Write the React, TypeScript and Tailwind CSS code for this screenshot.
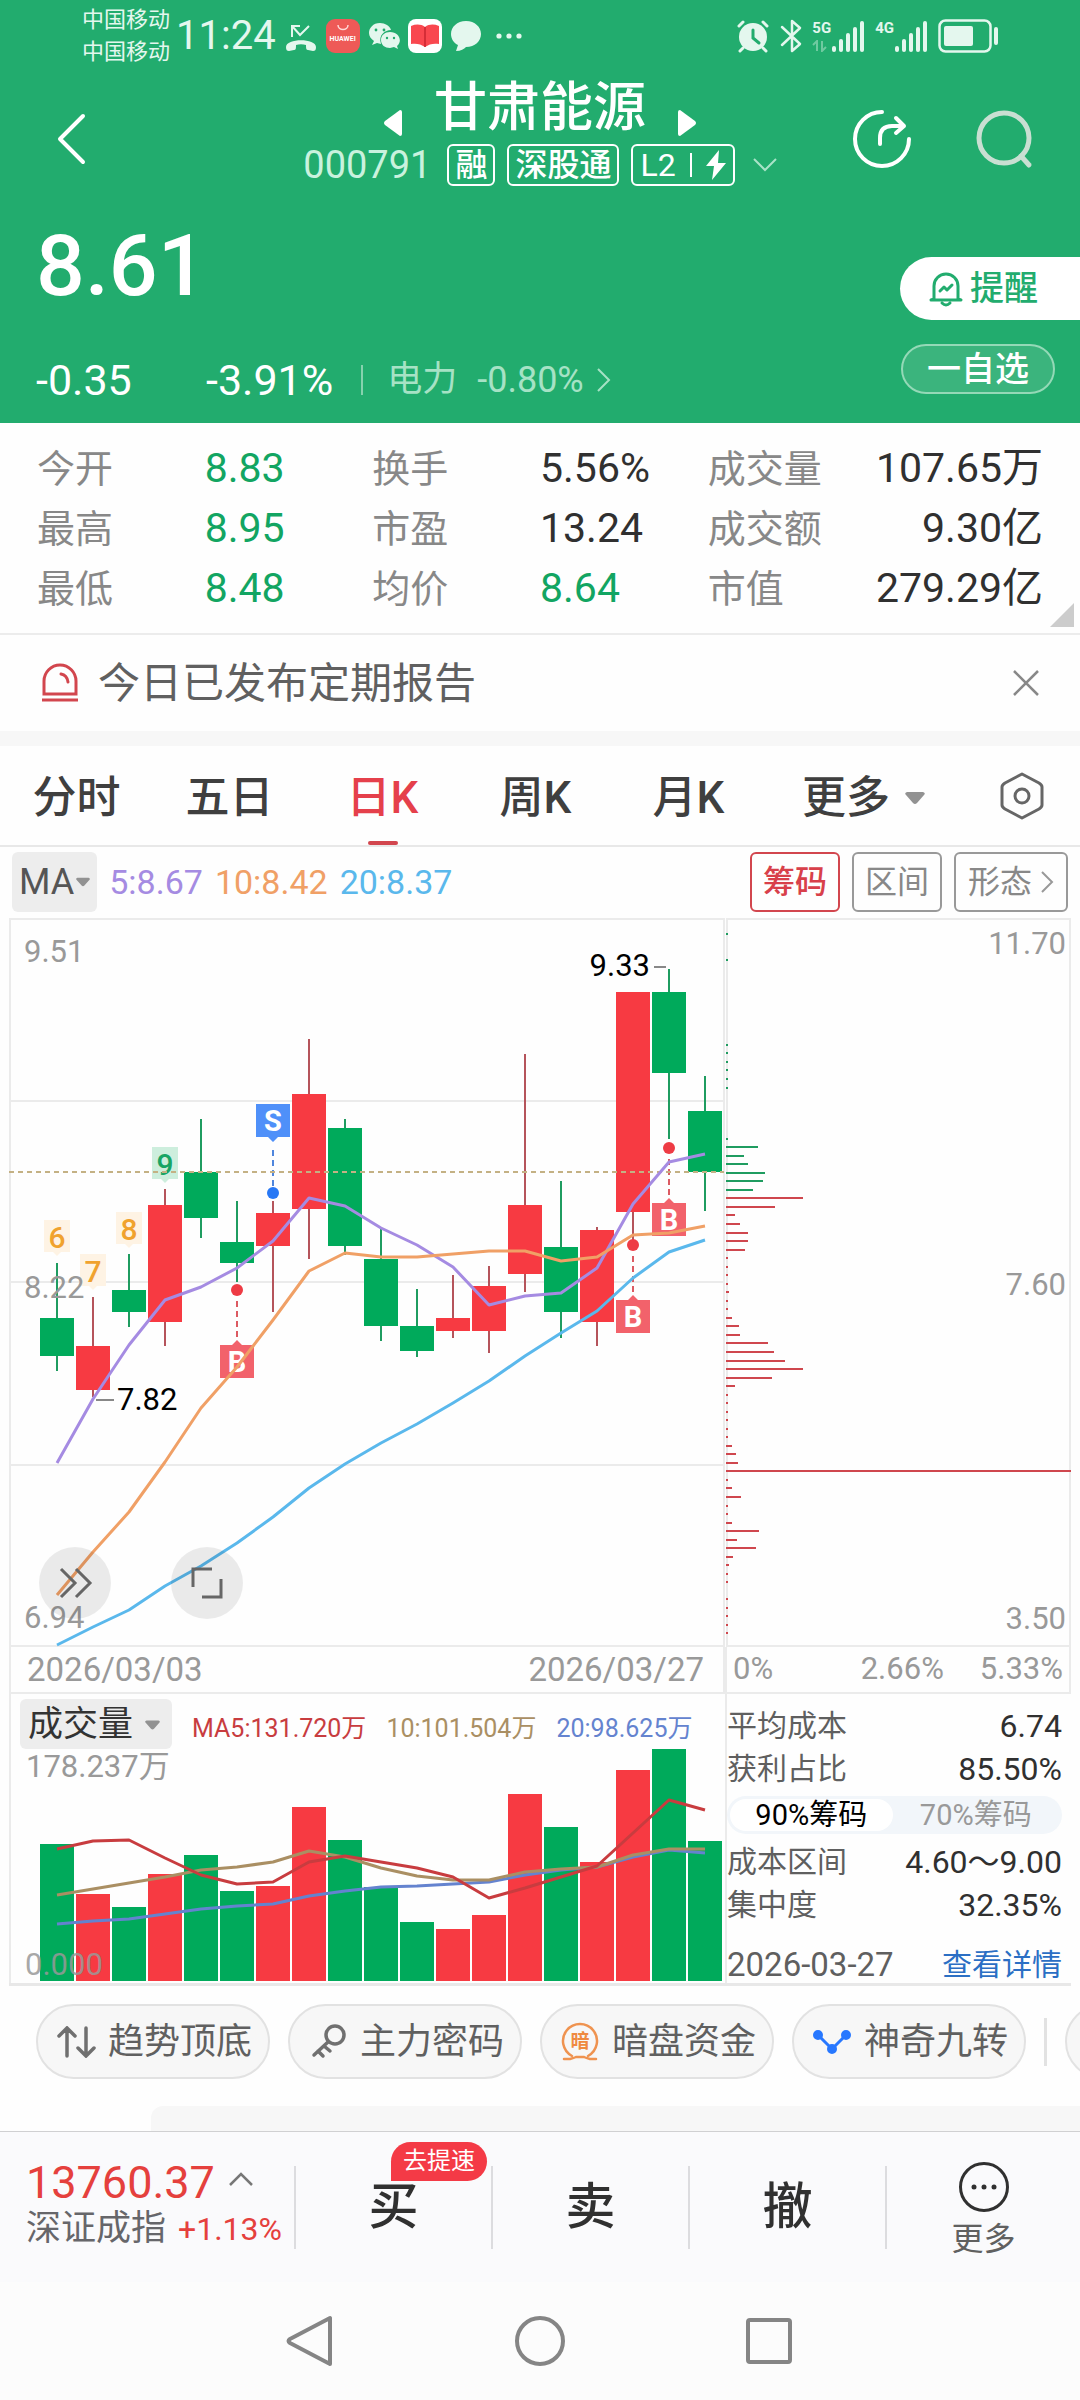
import type { ReactNode } from "react";

const GREEN = "#00aa5b";
const RED = "#f73a42";

type Candle = { up: boolean; top: number; bottom: number; high: number; low: number; volume: number };

// y values in the chart's own units, x comes from the index
const candles: Candle[] = [
  { up: false, top: 1318, bottom: 1356, high: 1263, low: 1371, volume: 1844 },
  { up: true, top: 1346, bottom: 1390, high: 1297, low: 1397, volume: 1894 },
  { up: false, top: 1290, bottom: 1312, high: 1254, low: 1327, volume: 1907 },
  { up: true, top: 1205, bottom: 1322, high: 1189, low: 1346, volume: 1874 },
  { up: false, top: 1172, bottom: 1218, high: 1119, low: 1238, volume: 1855 },
  { up: false, top: 1242, bottom: 1263, high: 1201, low: 1282, volume: 1891 },
  { up: true, top: 1213, bottom: 1246, high: 1201, low: 1312, volume: 1886 },
  { up: true, top: 1094, bottom: 1209, high: 1039, low: 1259, volume: 1807 },
  { up: false, top: 1128, bottom: 1246, high: 1119, low: 1255, volume: 1840 },
  { up: false, top: 1259, bottom: 1326, high: 1229, low: 1341, volume: 1887 },
  { up: false, top: 1326, bottom: 1351, high: 1289, low: 1357, volume: 1922 },
  { up: true, top: 1318, bottom: 1331, high: 1275, low: 1338, volume: 1929 },
  { up: true, top: 1286, bottom: 1331, high: 1266, low: 1353, volume: 1915 },
  { up: true, top: 1205, bottom: 1274, high: 1054, low: 1292, volume: 1794 },
  { up: false, top: 1247, bottom: 1312, high: 1181, low: 1338, volume: 1827 },
  { up: true, top: 1230, bottom: 1322, high: 1227, low: 1346, volume: 1862 },
  { up: true, top: 992, bottom: 1212, high: 992, low: 1242, volume: 1770 },
  { up: false, top: 992, bottom: 1073, high: 969, low: 1139, volume: 1749 },
  { up: false, top: 1111, bottom: 1172, high: 1076, low: 1211, volume: 1841 },
];

const cx = (i: number) => 57 + i * 36;
const toPoints = (ys: number[]) => ys.map((y, i) => `${cx(i)},${y}`).join(" ");

const priceLines = [
  { color: "#a58be2", ys: [1463, 1399, 1345, 1300, 1287, 1268, 1241, 1198, 1206, 1228, 1245, 1267, 1305, 1296, 1293, 1268, 1204, 1162, 1154] },
  { color: "#f0a066", ys: [1595, 1552, 1512, 1462, 1408, 1367, 1320, 1271, 1253, 1257, 1257, 1254, 1251, 1251, 1261, 1257, 1235, 1233, 1226] },
  { color: "#5ab8ec", ys: [1645, 1627, 1610, 1586, 1566, 1543, 1517, 1488, 1464, 1443, 1424, 1403, 1381, 1356, 1333, 1311, 1278, 1252, 1240] },
];

const volumeLines = [
  { color: "#6483cf", ys: [1924, 1921, 1919, 1914, 1909, 1906, 1904, 1896, 1891, 1887, 1886, 1884, 1882, 1875, 1870, 1867, 1857, 1850, 1853] },
  { color: "#aa8f63", ys: [1895, 1889, 1883, 1877, 1870, 1867, 1862, 1851, 1857, 1868, 1876, 1880, 1880, 1872, 1869, 1867, 1855, 1849, 1849] },
  { color: "#c83c3f", ys: [1849, 1841, 1840, 1858, 1875, 1884, 1882, 1862, 1856, 1862, 1868, 1877, 1898, 1888, 1877, 1866, 1833, 1800, 1810] },
];

// chip distribution, one entry per price step from the top; 0 is an empty step
const chipBars = [
  2, 0, 0, 2, 0, 0, 0, 0, 0, 0, 0, 0, 0, 2, 2, 2, 2, 2, 2, 0, 0, 0, 0, 0, 2, 32, 18, 22, 39, 37, 27, 77, 49, 9, 14, 22, 22, 19,
  2, 2, 2, 2, 3, 2, 2, 6, 13, 14, 42, 48, 59, 77, 46, 9, 2, 2, 2, 2, 2, 2, 6, 10, 12, 345, 2, 6, 15, 2, 2, 6, 33, 11, 30, 7,
  3, 2, 2, 0, 2, 2, 2, 2, 2,
];

const quote = [
  { label: "今开", value: "8.83", green: true },
  { label: "换手", value: "5.56%" },
  { label: "成交量", value: "107.65万" },
  { label: "最高", value: "8.95", green: true },
  { label: "市盈", value: "13.24" },
  { label: "成交额", value: "9.30亿" },
  { label: "最低", value: "8.48", green: true },
  { label: "均价", value: "8.64", green: true },
  { label: "市值", value: "279.29亿" },
];

const tabs = ["分时", "五日", "日K", "周K", "月K"];

const SignalBars = () => (
  <svg className="h-8 w-[34px]" viewBox="0 0 34 32" fill="#e4f7ee">
    <rect x="1" y="26" width="4" height="6" rx="2" />
    <rect x="8" y="19" width="4" height="13" rx="2" />
    <rect x="15" y="13" width="4" height="19" rx="2" />
    <rect x="22" y="7" width="4" height="25" rx="2" />
    <rect x="29" y="1" width="4" height="31" rx="2" />
  </svg>
);

const StatusBar = () => (
  <div className="flex h-[72px] items-center justify-between pr-20 pl-[82px] text-[#e4f7ee]">
    <div className="flex items-center">
      <div className="text-[22px] leading-8">
        <div>中国移动</div>
        <div>中国移动</div>
      </div>
      <div className="ml-1.5 text-[40px] leading-none">11:24</div>
      <svg className="ml-2 h-[34px] w-[34px]" viewBox="0 0 34 34" fill="none" stroke="#e4f7ee" strokeWidth="2">
        <path d="M8 18V7h8M8 7l8 9 9-9" />
        <path d="M2 28c0-9 30-9 30 0 0 3-1 4-3 4l-5-1c-2 0-2-2-2-5-3-1-7-1-10 0 0 3 0 5-2 5l-5 1c-2 0-3-1-3-4z" fill="#e4f7ee" stroke="none" />
      </svg>
      <div className="ml-2 flex size-[34px] flex-col items-center rounded-[9px] bg-[#ee5a57]">
        <svg className="mt-1 h-2.5 w-3" viewBox="0 0 12 10" fill="none" stroke="#ffd9d6" strokeWidth="1.5">
          <path d="M1 2c0 6 10 6 10 0" />
        </svg>
        <span className="text-[7px] leading-3 font-bold text-white">HUAWEI</span>
      </div>
      <svg className="ml-2 h-[34px] w-8" viewBox="0 0 32 34">
        <path d="M12 4C5 4 1 9 1 14c0 3 2 6 5 8l-2 4 5-2 4 1c-3-9 4-14 10-14-1-4-6-7-11-7z" fill="#e4f7ee" />
        <path d="M22 13c-5 0-9 3-9 8s4 8 9 8l4-1 4 2-1-3c6-5 2-14-7-14z" fill="#e4f7ee" />
        <g fill="#22ac6e">
          <circle cx="8" cy="11" r="1.4" />
          <circle cx="16" cy="11" r="1.4" />
          <circle cx="19" cy="19" r="1.2" />
          <circle cx="26" cy="19" r="1.2" />
        </g>
      </svg>
      <svg className="ml-2 size-[34px]" viewBox="0 0 34 34">
        <rect width="34" height="34" rx="8" fill="#fff" />
        <path d="M3 7c5-2 10-2 14 1 4-3 9-3 14-1v18c-5-1-10 0-14 3-4-3-9-4-14-3z" fill="#f9474f" />
        <path d="M17 8v20" stroke="#c9252f" strokeWidth="1.5" />
      </svg>
      <svg className="ml-2 h-8 w-8" viewBox="0 0 32 32" fill="#e4f7ee">
        <path d="M16 1C7 1 1 7 1 14c0 5 3 9 7 11l-2 6c5 0 8-2 10-4 9 0 15-6 15-13S25 1 16 1z" />
      </svg>
      <svg className="ml-3.5 h-2 w-[26px]" viewBox="0 0 26 8" fill="#e4f7ee">
        <circle cx="3" cy="4" r="2.6" />
        <circle cx="13" cy="4" r="2.6" />
        <circle cx="23" cy="4" r="2.6" />
      </svg>
    </div>
    <div className="flex items-center">
      <svg className="size-[34px]" viewBox="0 0 34 34" stroke="#e4f7ee" strokeWidth="3" strokeLinecap="round" fill="none">
        <circle cx="17" cy="18" r="14" fill="#e4f7ee" stroke="none" />
        <path d="M3 7l4-4M31 7l-4-4M7 29l-3 3M27 29l3 3" />
        <path d="M17 11v8l6 5" stroke="#22ac6e" />
      </svg>
      <svg className="ml-2.5 h-[34px] w-[22px]" viewBox="0 0 22 34" fill="none" stroke="#e4f7ee" strokeWidth="2.5" strokeLinejoin="round" strokeLinecap="round">
        <path d="M2 8l18 17-8 7V2l8 7L2 26" />
      </svg>
      <div className="relative ml-2.5 h-8 text-[15px] leading-4 font-bold">
        5G
        <svg className="absolute bottom-0 left-0 h-3 w-4" viewBox="0 0 16 12" fill="none" stroke="#6fcaa0" strokeWidth="2">
          <path d="M1 5l4-4v10M10 1v10l4-4" />
        </svg>
      </div>
      <SignalBars />
      <div className="ml-2.5 h-8 text-[15px] leading-4 font-bold">4G</div>
      <SignalBars />
      <svg className="ml-2.5 h-[34px] w-[62px]" viewBox="0 0 62 34" fill="none">
        <rect x="1.5" y="1.5" width="51" height="31" rx="6" stroke="#e4f7ee" strokeWidth="2.5" />
        <rect x="6" y="7" width="29" height="20" rx="2" fill="#e4f7ee" />
        <rect x="56" y="8" width="4" height="18" rx="2" fill="#e4f7ee" />
      </svg>
    </div>
  </div>
);

const TopHeader = () => (
  <header className="bg-[#22ac6e] text-white">
    <StatusBar />
    <div className="grid grid-cols-[1fr_auto_1fr] items-center">
      <button aria-label="返回" className="justify-self-start pt-5 pl-14">
        <svg className="h-[52px] w-8" viewBox="0 0 32 52" fill="none" stroke="#fff" strokeWidth="4" strokeLinecap="round" strokeLinejoin="round">
          <path d="M27 3L4 26l23 23" />
        </svg>
      </button>
      <div className="flex flex-col items-center">
        <div className="flex items-end gap-8 pt-1">
          <button aria-label="上一只" className="pb-1">
            <svg className="h-[26px] w-[18px]" viewBox="0 0 18 26" fill="#fff">
              <path d="M16 0q2 0 2 2v22q0 2-2 2L1 15q-2-2 0-4z" />
            </svg>
          </button>
          <h1 className="text-[53px] leading-[64px] font-medium">甘肃能源</h1>
          <button aria-label="下一只" className="pb-1">
            <svg className="h-[26px] w-[18px]" viewBox="0 0 18 26" fill="#fff">
              <path d="M2 0Q0 0 0 2v22q0 2 2 2l15-11q2-2 0-4z" />
            </svg>
          </button>
        </div>
        <div className="mt-1 flex h-[42px] items-center gap-3 text-[32px] leading-[38px] font-medium">
          <span className="mr-1 text-[38px] font-normal text-[#c9f2de]">000791</span>
          <span className="rounded-md border-2 border-white px-1.5">融</span>
          <span className="rounded-md border-2 border-white px-1.5">深股通</span>
          <span className="flex items-center gap-3.5 rounded-md border-2 border-white px-[7px]">
            <span className="font-normal">L2</span>
            <span className="h-6 w-0.5 bg-white" />
            <svg className="h-[30px] w-5" viewBox="0 0 20 30" fill="#fff">
              <path d="M13 0L0 16h8L6 30l14-17h-8z" />
            </svg>
          </span>
          <svg className="ml-1.5 h-4 w-6" viewBox="0 0 24 16" fill="none" stroke="#a9e3c8" strokeWidth="2">
            <path d="M1 2l11 11L23 2" />
          </svg>
        </div>
      </div>
      <div className="flex gap-[62px] justify-self-end pt-5 pr-[46px]">
        <button aria-label="分享">
          <svg className="size-[60px]" viewBox="0 0 60 60" fill="none" stroke="#fff" strokeWidth="4" strokeLinecap="round" strokeLinejoin="round">
            <path d="M30 3a27 27 0 1 0 27 27" />
            <path d="M28 35v-6c0-8 4-12 12-12h12M44 9l8 8-8 7" />
          </svg>
        </button>
        <button aria-label="搜索">
          <svg className="size-[60px]" viewBox="0 0 60 60" fill="none" stroke="#c9dfd2" strokeWidth="5" strokeLinecap="round">
            <circle cx="30" cy="29" r="25" />
            <path d="M47 47l8 9" />
          </svg>
        </button>
      </div>
    </div>
    <div className="flex justify-between pt-7 pb-[15px]">
      <div className="pl-9">
        <div className="text-[86px] leading-[104px] font-medium">8.61</div>
        <div className="mt-[34px] flex h-14 items-center text-[43px]">
          <span className="w-[170px]">-0.35</span>
          <span>-3.91%</span>
          <span className="ml-7 h-[30px] w-0.5 bg-[#86d2ae]" />
          <a href="#power" className="ml-6 flex items-center text-[35px] text-[#a6e2c5]">
            电力
            <span className="ml-5 text-[36px]">-0.80%</span>
            <svg className="ml-3 h-[26px] w-4" viewBox="0 0 16 26" fill="none" stroke="#a6e2c5" strokeWidth="2">
              <path d="M2 2l11 11L2 24" />
            </svg>
          </a>
        </div>
      </div>
      <div className="flex flex-col items-end gap-6 pt-[43px] text-[34px] font-medium">
        <button className="flex h-[63px] items-center gap-1.5 rounded-l-full bg-white pr-[42px] pl-7 text-[#22ac6e]">
          <svg className="h-9 w-9" viewBox="0 0 34 36" fill="none" stroke="#22ac6e" strokeWidth="3" strokeLinejoin="round" strokeLinecap="round">
            <path d="M5 28V15a12 12 0 0 1 24 0v13l3 1H2zM13 32q4 4 8 0M11 20l4-4 3 3 5-5" />
          </svg>
          提醒
        </button>
        <button className="mr-[25px] flex h-[50px] items-center rounded-full border-2 border-[#94d9b7] bg-[#3bb47d] px-6">一自选</button>
      </div>
    </div>
  </header>
);

const QuoteGrid = () => (
  <dl className="relative grid grid-cols-3 border-b-2 border-[#ececec] px-[37px] pt-4 pb-3.5">
    {quote.map((item, i) => (
      <div key={item.label} className={i % 3 === 2 ? "flex h-[60px] items-center justify-between" : "flex h-[60px] items-center"}>
        <dt className={i % 3 === 2 ? "text-[38px] text-[#888]" : "w-1/2 text-[38px] text-[#888]"}>{item.label}</dt>
        <dd className={item.green ? "text-[41px] text-[#12a562]" : "text-[41px] text-[#303030]"}>{item.value}</dd>
      </div>
    ))}
    <svg className="absolute right-1.5 bottom-1.5 size-6" viewBox="0 0 24 24" fill="#ccc">
      <path d="M24 0v24H0z" />
    </svg>
  </dl>
);

const Caret = ({ className }: { className: string }) => (
  <svg className={className} viewBox="0 0 20 12" fill="#929292">
    <path d="M2 0h16q3 1 1 3l-7 8q-2 2-4 0L1 3Q-1 1 2 0z" />
  </svg>
);

const Tabs = () => (
  <nav className="grid grid-cols-[153fr_153fr_153fr_153fr_153fr_198fr_117fr] border-b-2 border-[#e8e8e8] text-[44px] font-medium text-[#3f3f3f]">
    {tabs.map((tab) => (
      <button key={tab} className={tab === "日K" ? "relative h-[99px] pt-1 text-[#e5404b]" : "h-[99px] pt-1"}>
        {tab}
        {tab === "日K" && <span className="absolute bottom-0 left-1/2 h-1 w-[30px] -translate-x-1/2 rounded-full bg-[#d2464e]" />}
      </button>
    ))}
    <button className="flex items-center justify-center gap-3.5 pt-1">
      更多
      <Caret className="h-3 w-[22px]" />
    </button>
    <button aria-label="设置" className="flex items-center justify-center">
      <svg className="h-[50px] w-12" viewBox="0 0 48 50" fill="none" stroke="#666" strokeWidth="3" strokeLinejoin="round">
        <path d="M24 3l17 9q3 2 3 4v18q0 2-3 4l-17 9-17-9q-3-2-3-4V16q0-2 3-4z" />
        <circle cx="24" cy="25" r="7" />
      </svg>
    </button>
  </nav>
);

const IndicatorBar = () => (
  <div className="flex items-center justify-between px-3 pt-[5px] pb-1.5">
    <div className="flex items-center gap-3 text-[34px]">
      <button className="flex h-[60px] items-center gap-0.5 rounded-md bg-[#ededed] px-[7px] text-[36px] text-[#555]">
        MA
        <Caret className="h-2.5 w-3.5" />
      </button>
      <span className="text-[#a58be2]">5:8.67</span>
      <span className="text-[#f0a066]">10:8.42</span>
      <span className="text-[#5ab8ec]">20:8.37</span>
    </div>
    <div className="flex gap-3 text-[32px] text-[#888]">
      <button className="h-[60px] rounded-md border-2 border-[#d2464e] px-[11px] font-medium text-[#d8404a]">筹码</button>
      <button className="h-[60px] rounded-md border-2 border-[#999] px-[11px]">区间</button>
      <button className="flex h-[60px] items-center gap-2 rounded-md border-2 border-[#999] px-3">
        形态
        <svg className="h-6 w-3.5" viewBox="0 0 14 24" fill="none" stroke="#999" strokeWidth="2">
          <path d="M2 2l10 10L2 22" />
        </svg>
      </button>
    </div>
  </div>
);

const CountTag = ({ x, y, label, green }: { x: number; y: number; label: string; green?: boolean }) => (
  <g>
    <path d={`M${x - 13} ${y}h26v32h-9l-4 4-4-4h-9z`} fill={green ? "#cdeedd" : "#fef3e4"} />
    <text x={x} y={y + 28} textAnchor="middle" fontSize="30" fontWeight="500" fill={green ? "#18a564" : "#f0a22e"}>{label}</text>
  </g>
);

const BuyMark = ({ x, y }: { x: number; y: number }) => (
  <g>
    <circle cx={x} cy={y} r="6" fill="#ee3b44" />
    <path d={`M${x} ${y + 11}v37`} stroke="#dc5a62" strokeWidth="2" strokeDasharray="6 4" />
    <path d={`M${x - 17} ${y + 55}h12l5-5 5 5h12v33h-34z`} fill="#f2626b" />
    <text x={x} y={y + 82} textAnchor="middle" fontSize="29" fontWeight="700" fill="#fff">B</text>
  </g>
);

const PriceChart = () => (
  <svg className="block h-auto w-full" viewBox="9 918 716 729" fontSize="31">
    <g stroke="#ebebeb" strokeWidth="2">
      <path d="M9 1101h715M9 1282h715M9 1465h715M9 1646h715" />
      <path d="M9 919h715M10 918v729M724 918v729" />
    </g>
    {candles.map((c, i) => (
      <g key={i}>
        <path d={`M${cx(i)} ${c.high}V${c.low}`} stroke={c.up ? "#b5545b" : "#1f9c60"} strokeWidth="2" />
        <rect x={cx(i) - 17} y={c.top} width="34" height={c.bottom - c.top} fill={c.up ? RED : GREEN} />
      </g>
    ))}
    <CountTag x={57} y={1220} label="6" />
    <CountTag x={93} y={1254} label="7" />
    <CountTag x={129} y={1212} label="8" />
    <CountTag x={165} y={1147} label="9" green />
    <path d="M256 1104h34v33h-12l-5 5-5-5h-12z" fill="#4f90f9" />
    <text x="273" y="1131" textAnchor="middle" fontSize="29" fontWeight="700" fill="#fff">S</text>
    <path d="M273 1150v37" stroke="#4f86dd" strokeWidth="2" strokeDasharray="6 4" />
    <circle cx="273" cy="1193" r="6" fill="#2878f5" />
    <BuyMark x={237} y={1290} />
    <BuyMark x={633} y={1245} />
    <BuyMark x={669} y={1148} />
    <path d="M9 1172h715" stroke="#c4b184" strokeWidth="2" strokeDasharray="5 4" />
    {priceLines.map((line) => (
      <polyline key={line.color} points={toPoints(line.ys)} fill="none" stroke={line.color} strokeWidth="3" strokeLinejoin="round" />
    ))}
    <path d="M96 1400h18M654 967h12" stroke="#888" strokeWidth="2" />
    <text x="117" y="1410" fill="#000">7.82</text>
    <text x="650" y="976" textAnchor="end" fill="#000">9.33</text>
    <g fill="#999">
      <text x="24" y="962">9.51</text>
      <text x="24" y="1298">8.22</text>
      <text x="24" y="1628">6.94</text>
    </g>
  </svg>
);

const ChipChart = () => (
  <svg className="block h-auto w-full" viewBox="725 918 346 729" fontSize="31">
    <path d="M726 919h344M726 1646h344M727 918v729M1070 918v729" stroke="#ebebeb" strokeWidth="2" />
    {chipBars.map((width, i) => (
      <rect key={i} x="726" y={Math.round(933 + i * 8.53)} width={width} height="2" fill={i < 31 ? "#1f9c60" : "#cf474e"} />
    ))}
    <g fill="#999" textAnchor="end">
      <text x="1066" y="954">11.70</text>
      <text x="1066" y="1295">7.60</text>
      <text x="1066" y="1629">3.50</text>
    </g>
  </svg>
);

const VolumePanel = () => (
  <div className="border-l-2 border-[#ebebeb]">
    <div className="flex h-[55px] items-end gap-5 pl-[9px] text-[25px] leading-10">
      <button className="flex h-[50px] items-center gap-3 rounded-md bg-[#ededed] px-2 pt-0.5 text-[35px] text-[#333]">
        成交量
        <Caret className="mr-1 h-2.5 w-[15px]" />
      </button>
      <span className="text-[#c83c3f]">MA5:131.720万</span>
      <span className="text-[#aa8f63]">10:101.504万</span>
      <span className="text-[#6483cf]">20:98.625万</span>
    </div>
    <svg className="block h-auto w-full" viewBox="11 1749 714 234" fontSize="31" fill="#999">
      <text x="26" y="1777">178.237万</text>
      {candles.map((c, i) => (
        <rect key={i} x={cx(i) - 17} y={c.volume} width="34" height={1981 - c.volume} fill={c.up ? RED : GREEN} />
      ))}
      {volumeLines.map((line) => (
        <polyline key={line.color} points={toPoints(line.ys)} fill="none" stroke={line.color} strokeWidth="3" strokeLinejoin="round" />
      ))}
      <text x="25" y="1975" fillOpacity="0.85">0.000</text>
    </svg>
  </div>
);

const ChipRow = ({ label, value }: { label: string; value: string }) => (
  <div className="flex h-[43px] items-center justify-between">
    <dt className="text-[#5f5f5f]">{label}</dt>
    <dd className="text-[32px] text-[#303030]">{value}</dd>
  </div>
);

const ChipPanel = () => (
  <div className="border-l-2 border-[#ebebeb] pt-2.5 pr-[9px] text-[30px]">
    <dl>
      <ChipRow label="平均成本" value="6.74" />
      <ChipRow label="获利占比" value="85.50%" />
    </dl>
    <div className="my-1.5 grid h-[38px] grid-cols-[163fr_167fr] rounded-full bg-[#f2f6fa] p-[3px] text-[29px] leading-8">
      <button className="rounded-full bg-white text-black">90%筹码</button>
      <button className="text-[#999]">70%筹码</button>
    </div>
    <dl>
      <ChipRow label="成本区间" value="4.60～9.00" />
      <ChipRow label="集中度" value="32.35%" />
    </dl>
    <div className="mt-[21px] flex items-center justify-between leading-9">
      <span className="text-[33px] text-[#5f5f5f]">2026-03-27</span>
      <a href="#detail" className="text-[#2b6fc4]">查看详情</a>
    </div>
  </div>
);

const Charts = () => (
  <section className="mx-[9px] grid grid-cols-[716fr_346fr] border-b-3 border-[#e8e8e8]">
    <div className="relative">
      <PriceChart />
      <button aria-label="展开" className="absolute bottom-7 left-[30px] flex size-[72px] items-center justify-center rounded-full bg-black/8">
        <svg className="size-9" viewBox="0 0 36 36" fill="none" stroke="#666" strokeWidth="3">
          <path d="M4 4l14 14L4 32M19 4l14 14-14 14" />
        </svg>
      </button>
      <button aria-label="全屏" className="absolute bottom-7 left-[162px] flex size-[72px] items-center justify-center rounded-full bg-black/8">
        <svg className="size-9" viewBox="0 0 36 36" fill="none" stroke="#666" strokeWidth="3">
          <path d="M4 22V4h19M32 14v18H13" />
        </svg>
      </button>
    </div>
    <ChipChart />
    <div className="flex h-[47px] items-center justify-between border-x-2 border-b-2 border-[#ebebeb] pr-[19px] pl-4 text-[33px] text-[#999]">
      <span>2026/03/03</span>
      <span>2026/03/27</span>
    </div>
    <div className="flex h-[47px] items-center border-x-2 border-b-2 border-[#ebebeb] px-1.5 text-[31px] text-[#999]">
      <span>0%</span>
      <span className="mr-9 ml-auto">2.66%</span>
      <span>5.33%</span>
    </div>
    <VolumePanel />
    <ChipPanel />
  </section>
);

const Shortcut = ({ label, children }: { label: string; children?: ReactNode }) => (
  <button className="flex h-[75px] w-[234px] shrink-0 items-center justify-between rounded-full border-2 border-[#e2e2e2] bg-[#f7f7f7] pr-4 pl-[19px]">
    {children}
    {label}
  </button>
);

const Shortcuts = () => (
  <section>
    <div className="flex items-center gap-[18px] overflow-hidden pt-[18px] pb-[27px] pl-9 text-[36px] text-[#606060]">
      <Shortcut label="趋势顶底">
        <svg className="h-8 w-10" viewBox="0 0 40 32" fill="none" stroke="#707070" strokeWidth="3.5" strokeLinecap="round">
          <path d="M10 30V3M2 10l8-8 8 8M29 2v27M21 22l8 8 8-8" />
        </svg>
      </Shortcut>
      <Shortcut label="主力密码">
        <svg className="h-9 w-10" viewBox="0 0 40 36" fill="none" stroke="#707070" strokeWidth="3.5" strokeLinecap="round">
          <circle cx="26" cy="11" r="9" />
          <path d="M19 18L5 31M15 22l6 5M9 27l5 5" />
        </svg>
      </Shortcut>
      <Shortcut label="暗盘资金">
        <svg className="size-10" viewBox="0 0 40 40" fill="none" stroke="#ef9350" strokeWidth="2.5" strokeLinecap="round">
          <path d="M11 34a17 17 0 1 1 16 0M3 37h6q4-1 6-2h8q2 1 6 2h6" />
          <text x="19" y="26" textAnchor="middle" fontSize="19" fontWeight="700" fill="#ef8a40" stroke="none">暗</text>
        </svg>
      </Shortcut>
      <Shortcut label="神奇九转">
        <svg className="h-8 w-10" viewBox="0 0 40 32" fill="#2878ff" stroke="#2878ff" strokeWidth="2">
          <path d="M5 9l14 14L33 9" fill="none" strokeWidth="3" />
          <circle cx="5" cy="9" r="4" />
          <circle cx="19" cy="23" r="4" />
          <circle cx="33" cy="9" r="4" />
        </svg>
      </Shortcut>
      <span className="h-12 w-[3px] shrink-0 bg-[#e2e2e2]" />
      <Shortcut label="" />
    </div>
    <div className="ml-[151px] h-[25px] rounded-tl-xl bg-[#f7f7f7]" />
  </section>
);

const TradeBar = () => (
  <footer className="grid h-[151px] grid-cols-[294fr_197fr_197fr_197fr_195fr] items-center border-t border-[#d0d0d2] bg-[#fafafc]">
    <a href="#index" className="pb-1.5 pl-[26px]">
      <div className="flex items-center gap-3.5 text-[45px] leading-[50px] text-[#e5403d]">
        13760.37
        <svg className="mb-2 h-4 w-6" viewBox="0 0 24 16" fill="none" stroke="#777" strokeWidth="2.5">
          <path d="M1 14L12 3l11 11" />
        </svg>
      </div>
      <div className="flex items-center gap-3 text-[35px] leading-[42px] text-[#66666a]">
        深证成指
        <span className="text-[32px] text-[#e5403d]">+1.13%</span>
      </div>
    </a>
    <button className="relative h-[83px] border-l-2 border-[#dcdcdf] text-[50px] font-medium text-[#303030]">
      买
      <span className="absolute -top-6 left-[95px] rounded-full rounded-bl-none bg-[#f43a46] px-3 text-[24px] leading-[39px] font-normal text-white">去提速</span>
    </button>
    <button className="h-[83px] border-l-2 border-[#dcdcdf] text-[50px] font-medium text-[#303030]">卖</button>
    <button className="h-[83px] border-l-2 border-[#dcdcdf] text-[50px] font-medium text-[#303030]">撤</button>
    <button className="flex h-[83px] flex-col items-center justify-center border-l-2 border-[#dcdcdf] text-[32px] leading-10 text-[#606060]">
      <svg className="mt-1.5 size-[52px] shrink-0" viewBox="0 0 52 52" fill="none" stroke="#303030" strokeWidth="3">
        <circle cx="26" cy="26" r="23.5" />
        <g fill="#303030" stroke="none">
          <circle cx="16" cy="26" r="2.5" />
          <circle cx="26" cy="26" r="2.5" />
          <circle cx="36" cy="26" r="2.5" />
        </g>
      </svg>
      <span className="mt-1.5">更多</span>
    </button>
  </footer>
);

const SystemNav = () => (
  <div className="flex h-[118px] items-center justify-center gap-[177px] bg-[#fcfcfc]">
    <button aria-label="系统返回">
      <svg className="size-[52px]" viewBox="0 0 52 52" fill="none" stroke="#858585" strokeWidth="4" strokeLinejoin="round">
        <path d="M45 3v46L5 28q-3-2 0-4z" />
      </svg>
    </button>
    <button aria-label="主屏幕">
      <svg className="size-[52px]" viewBox="0 0 52 52" fill="none" stroke="#858585" strokeWidth="4">
        <circle cx="26" cy="26" r="23" />
      </svg>
    </button>
    <button aria-label="最近任务">
      <svg className="size-[52px]" viewBox="0 0 52 52" fill="none" stroke="#858585" strokeWidth="4">
        <rect x="5" y="5" width="42" height="42" rx="2" />
      </svg>
    </button>
  </div>
);

const App = () => (
  <div className="min-h-screen overflow-hidden bg-[#fefefe] font-['Roboto','Noto_Sans_CJK_SC',sans-serif]">
    <TopHeader />
    <main>
      <QuoteGrid />
      <div className="flex h-24 items-center pr-10 pl-10 text-[#606060]">
        <svg className="h-10 w-10" viewBox="0 0 40 40" fill="none" stroke="#d2464e" strokeWidth="3">
          <path d="M4 31V18a16 16 0 0 1 32 0v13zM2 37h36" />
          <path d="M21 11q6 1 7 8" strokeLinecap="round" />
        </svg>
        <p className="ml-[18px] text-[42px]">今日已发布定期报告</p>
        <button aria-label="关闭" className="ml-auto">
          <svg className="size-7" viewBox="0 0 28 28" fill="none" stroke="#888" strokeWidth="2.5">
            <path d="M2 2l24 24M26 2L2 26" />
          </svg>
        </button>
      </div>
      <div className="h-[15px] bg-[#f7f7f7]" />
      <Tabs />
      <IndicatorBar />
      <Charts />
      <Shortcuts />
    </main>
    <TradeBar />
    <SystemNav />
  </div>
);

export default App;
